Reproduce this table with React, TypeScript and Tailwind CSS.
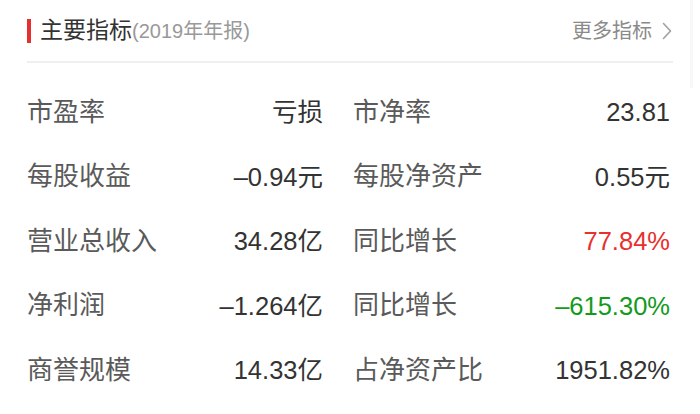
import React from 'react';

type Item = { label: string; value: string; tone?: 'up' | 'down' };

const rows: Array<[Item, Item]> = [
  [{ label: '市盈率', value: '亏损' }, { label: '市净率', value: '23.81' }],
  [{ label: '每股收益', value: '–0.94元' }, { label: '每股净资产', value: '0.55元' }],
  [{ label: '营业总收入', value: '34.28亿' }, { label: '同比增长', value: '77.84%', tone: 'up' }],
  [{ label: '净利润', value: '–1.264亿' }, { label: '同比增长', value: '–615.30%', tone: 'down' }],
  [{ label: '商誉规模', value: '14.33亿' }, { label: '占净资产比', value: '1951.82%' }],
];

function Cell({ item }: { item: Item }) {
  const color =
    item.tone === 'up' ? 'text-[#e8302e]' : item.tone === 'down' ? 'text-[#139a1c]' : 'text-[#333333]';
  return (
    <div className="flex h-[64.5px] items-center justify-between">
      <span className="text-[26px] text-[#5a5a5a]">{item.label}</span>
      <span className={`text-[25.5px] ${color}`}>{item.value}</span>
    </div>
  );
}

export default function App() {
  return (
    <div
      className="relative h-[414px] w-[700px] overflow-hidden bg-white"
      style={{ fontFamily: '"Liberation Sans", "Noto Sans CJK SC", sans-serif' }}
    >
      {/* faint scroll track on the right */}
      <div className="absolute right-[7px] top-0 h-[88px] w-[3px] bg-[#f7f7f7]" />

      <div className="px-[27px]">
        <div className="flex h-[63px] items-center justify-between border-b-2 border-[#efefef]">
          <div className="flex items-center">
            <div className="h-[24px] w-[4px] bg-[#e5302f]" />
            <span className="ml-[9px] text-[23px] leading-none text-[#333333]">主要指标</span>
            <span className="text-[20px] leading-none text-[#999999]">(2019年年报)</span>
          </div>
          <div className="flex items-center pr-[1px]">
            <span className="text-[20px] text-[#8a8a8a]">更多指标</span>
            <svg className="ml-[10px]" width="10" height="18" viewBox="0 0 10 18" fill="none">
              <path d="M1.5 1.5 L8.5 9 L1.5 16.5" stroke="#a0a0a0" strokeWidth="1.6" strokeLinecap="round" strokeLinejoin="round" />
            </svg>
          </div>
        </div>

        <div className="mt-[17px] grid grid-cols-[296px_317px] gap-x-[30px]">
          {rows.map(([a, b], i) => (
            <React.Fragment key={i}>
              <Cell item={a} />
              <Cell item={b} />
            </React.Fragment>
          ))}
        </div>
      </div>
    </div>
  );
}
